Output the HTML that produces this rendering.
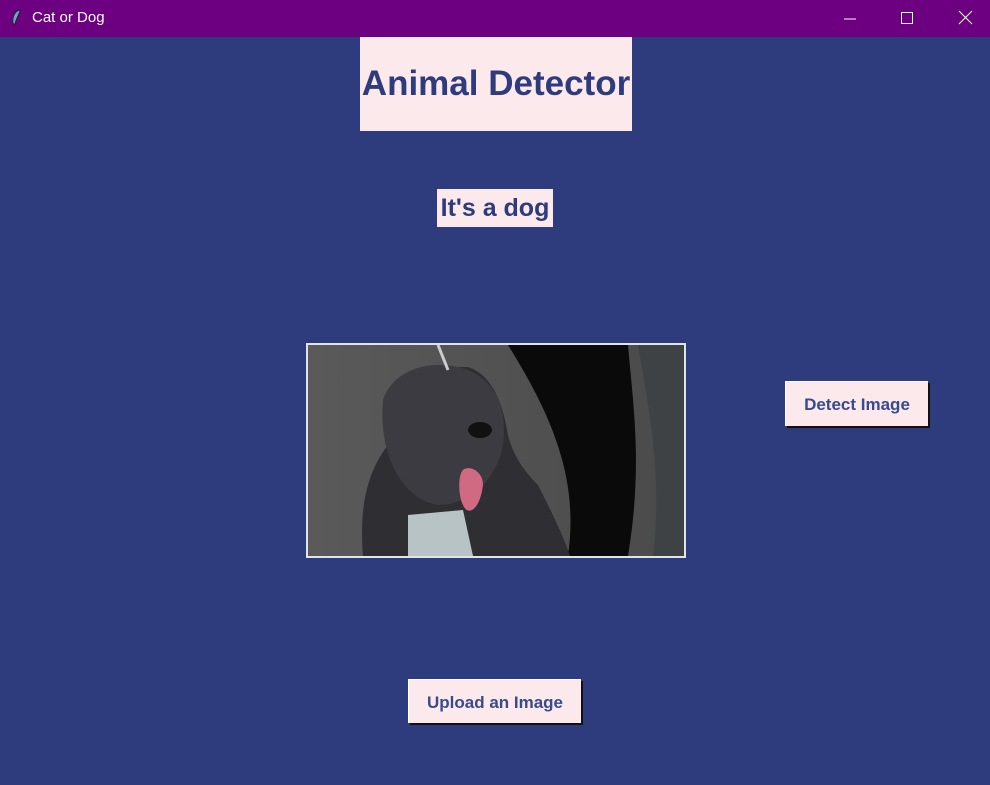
<!DOCTYPE html>
<html><head><meta charset="utf-8"><style>
body{margin:0;width:990px;height:785px;background:#2e3b7c;position:relative;overflow:hidden;font-family:"Liberation Sans",Arial,sans-serif}
.tb{position:absolute;left:0;top:0;width:990px;height:37px;background:#6c0080;color:#fff;font-size:15px}
.tb .t{position:absolute;left:32px;top:9px}
.box{position:absolute;background:#fbe9ec;color:#2e3b7c;font-weight:bold;text-align:center}
.btn{position:absolute;background:#fbe9ec;color:#3a4a8f;font-weight:bold;font-size:17px;text-align:center;box-shadow:2px 2px 0 #111;border-top:1px solid #fff;border-left:1px solid #fff;box-sizing:border-box}
</style></head><body>
<div class="tb">
<svg style="position:absolute;left:10px;top:9px" width="12" height="18" viewBox="0 0 12 18"><path d="M9 1 C4 3 2 9 3 15 L5 15 C6 10 9 6 10 2Z" fill="#6fa0d8" stroke="#222" stroke-width="1"/></svg>
<span class="t">Cat or Dog</span>
<svg style="position:absolute;left:843px;top:12px" width="14" height="14"><line x1="1" y1="7" x2="13" y2="7" stroke="#fff"/></svg>
<svg style="position:absolute;left:900px;top:11px" width="14" height="14"><rect x="1.5" y="1.5" width="11" height="11" fill="none" stroke="#fff"/></svg>
<svg style="position:absolute;left:958px;top:10px" width="15" height="15"><path d="M1 1L14 14M14 1L1 14" stroke="#fff"/></svg>
</div>
<div class="box" style="left:360px;top:37px;width:272px;height:94px;line-height:94px;font-size:35px">Animal Detector</div>
<div class="box" style="left:437px;top:189px;width:116px;height:38px;line-height:39px;font-size:25px">It's a dog</div>
<div style="position:absolute;left:306px;top:343px;width:376px;height:211px;border:2px solid #dfe3ea;overflow:hidden;background:#555">
<svg width="376" height="211" viewBox="0 0 376 211">
<defs><linearGradient id="g" x1="0" x2="1"><stop offset="0" stop-color="#5a5a5a"/><stop offset="1" stop-color="#4a4a4a"/></linearGradient></defs>
<rect width="376" height="211" fill="url(#g)"/>
<path d="M200 0 L320 0 C325 60 335 120 320 211 L260 211 C270 140 250 80 200 0Z" fill="#0a0a0a"/>
<path d="M330 0 L376 0 L376 211 L345 211 C355 130 340 60 330 0Z" fill="#3e4244"/>
<path d="M55 211 C50 150 65 120 80 100 L75 60 C80 35 100 25 120 22 L160 22 C185 30 195 60 200 90 C205 110 215 125 230 140 C245 170 255 190 262 211Z" fill="#2f2e33"/>
<path d="M75 55 C85 25 120 15 150 22 C185 30 200 60 195 100 C190 130 165 160 130 160 C95 155 70 110 75 55Z" fill="#3c3b42"/>
<path d="M100 170 L155 165 L165 211 L100 211Z" fill="#b8c3c6"/>
<path d="M155 125 C160 120 175 125 175 140 C172 165 160 172 155 160 C150 150 150 130 155 125Z" fill="#d06a82"/>
<ellipse cx="172" cy="85" rx="12" ry="8" fill="#111"/>
<path d="M130 0 L140 25" stroke="#ccc" stroke-width="3"/>
</svg></div>
<div class="btn" style="left:785px;top:381px;width:143px;height:45px;line-height:46px">Detect Image</div>
<div class="btn" style="left:408px;top:679px;width:173px;height:44px;line-height:45px">Upload an Image</div>
</body></html>
